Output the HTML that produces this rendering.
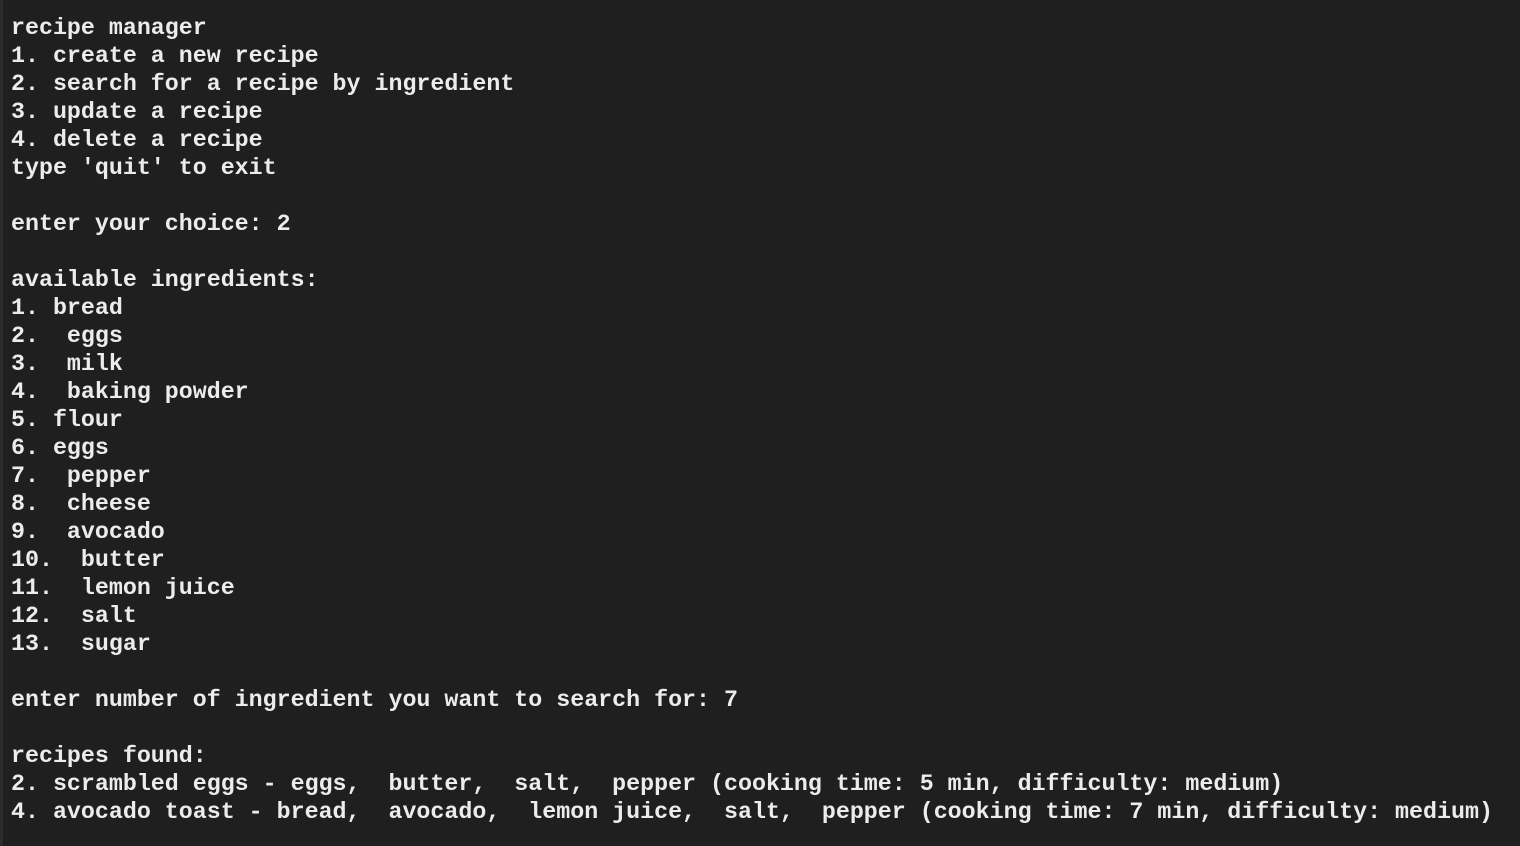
<!DOCTYPE html>
<html><head><style>
html,body{margin:0;padding:0;background:#1f1f1f;width:1520px;height:846px;overflow:hidden}
pre{margin:0;position:absolute;left:11px;top:14px;font-family:"Liberation Mono",monospace;font-size:23.3px;line-height:28px;color:#ececec;font-weight:bold;letter-spacing:0}
.edge{position:absolute;left:0;top:0;width:3px;height:846px;background:#2c2c2c}
</style></head><body><div class="edge"></div><pre>recipe manager
1. create a new recipe
2. search for a recipe by ingredient
3. update a recipe
4. delete a recipe
type 'quit' to exit

enter your choice: 2

available ingredients:
1. bread
2.  eggs
3.  milk
4.  baking powder
5. flour
6. eggs
7.  pepper
8.  cheese
9.  avocado
10.  butter
11.  lemon juice
12.  salt
13.  sugar

enter number of ingredient you want to search for: 7

recipes found:
2. scrambled eggs - eggs,  butter,  salt,  pepper (cooking time: 5 min, difficulty: medium)
4. avocado toast - bread,  avocado,  lemon juice,  salt,  pepper (cooking time: 7 min, difficulty: medium)</pre></body></html>
